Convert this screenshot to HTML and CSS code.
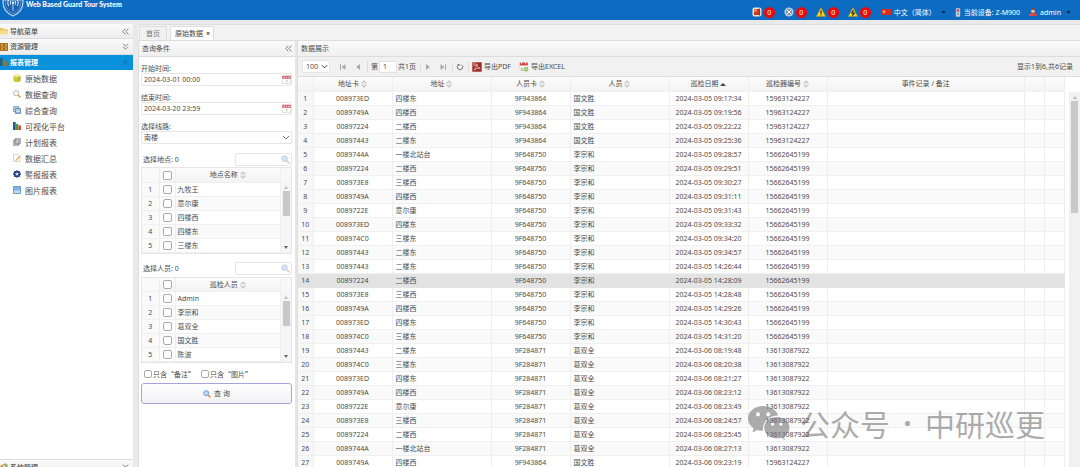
FILE: index.html
```html
<!DOCTYPE html>
<html>
<head>
<meta charset="utf-8">
<title>Web Based Guard Tour System</title>
<link rel="stylesheet" href="styles.css">
</head>
<body>
<svg class="defs" aria-hidden="true">
  <symbol id="sort" viewBox="0 0 6 8"><path d="M0 3.300 3 .3l3 3zM0 4.700l3 3 3-3z" fill="#bbb"/><path d="M1.800 2.700 3 1.500l1.200 1.200zM1.800 5.300 3 6.500l1.200-1.200z" fill="#fff"/></symbol>
  <symbol id="chev" viewBox="0 0 8 5"><path d="M1 1l3 3 3-3" fill="none" stroke="currentColor" stroke-width="1"/></symbol>
  <symbol id="caret" viewBox="0 0 6 4"><path d="M0 0h6L3 4z" fill="currentColor"/></symbol>
  <symbol id="collapse" viewBox="0 0 7 7"><path d="M3.300.6.7 3.500l2.600 2.900M6.400.6 3.800 3.500l2.600 2.900" fill="none" stroke="#666" stroke-width=".8"/></symbol>
  <symbol id="down" viewBox="0 0 7 7"><path d="M1 .7l2.500 2.500L6 .7M1 3.700l2.500 2.500L6 3.700" fill="none" stroke="#666" stroke-width=".8"/></symbol>
  <symbol id="up" viewBox="0 0 7 7"><path d="M1 3.300 3.500.8 6 3.300M1 6.300l2.500-2.500L6 6.300" fill="none" stroke="#15608f" stroke-width=".8"/></symbol>
  <symbol id="cal" viewBox="0 0 9 9"><path d="M.5 1h8v7.500h-8z" fill="#fff" stroke="#ccc" stroke-width=".6"/><path d="M.3.8h8.400v3H.3z" fill="#d9606a"/><path d="M1.500 2.300h1.500m1 0h1m1 0h1.500" stroke="#fff" stroke-width=".8"/><path d="M4 5.200h1v2.300" fill="none" stroke="#c99" stroke-width=".7"/></symbol>
  <symbol id="mag" viewBox="0 0 10 10"><circle cx="4" cy="4" r="3" fill="#d5e6f8" stroke="#b4c9e0"/><path d="M6.300 6.300 9 9" stroke="#dcc6b4" stroke-width="1.500" stroke-linecap="round"/></symbol>
  <symbol id="chart" viewBox="0 0 10 10"><path d="M0 0h3.400v10H0z" fill="#2c5b86"/><path d="M3.400 2.500h3.300V10H3.400z" fill="#3d9a50"/><path d="M6.700 4.300H10V10H6.700z" fill="#c9502f"/></symbol>
</svg>

<header class="top">
  <div class="brand">
    <svg class="logo" viewBox="0 0 22 17"><path d="M1 0h20v2c0 6-3 11-10 14C4 13 1 8 1 2z" fill="#1b64b2" stroke="#b8d4ee" stroke-width="1.200"/><path d="M3.200 0v2c0 5 2.500 9 7.800 11.700C16.300 11 18.800 7 18.800 2V0" fill="none" stroke="#6ba3d8" stroke-width=".7"/><path d="M6.500 0C5.500 2 5.500 4 6.800 6M8.800 1c-.6 1.200-.6 2.500 0 3.700M15.500 0c1 2 1 4-.3 6M13.200 1c.6 1.200.6 2.500 0 3.700" fill="none" stroke="#fff" stroke-width=".9"/><circle cx="11" cy="2.600" r="1.200" fill="#fff"/><path d="M11 3v8" stroke="#dbe9f7" stroke-width=".8"/></svg>
    <span class="name">Web Based Guard Tour System</span>
  </div>
  <div class="status">
    <span class="alert"><svg class="i10" viewBox="0 0 10 10"><rect x=".5" y=".5" width="9" height="9" rx="2" fill="#e8e2e0"/><path d="M2 2h5v6H2z" fill="#c43a21"/><path d="M2 2h3v3H2z" fill="#f07a4a"/><path d="M7.600 1.500v7" stroke="#333" stroke-width=".9"/></svg><b class="badge">0</b></span>
    <span class="alert"><svg class="i10" viewBox="0 0 10 10"><circle cx="5" cy="5" r="4.600" fill="#b9cbd9"/><circle cx="5" cy="5" r="3" fill="#7b96ab"/><path d="M2.800 2.800l4.400 4.400m0-4.400L2.800 7.200" stroke="#eef4f8"/></svg><b class="badge">0</b></span>
    <span class="alert"><svg class="i10" viewBox="0 0 10 10"><path d="M5 .5 9.700 9.500H.3z" fill="#f4d321" stroke="#a98f15" stroke-width=".5"/><path d="M5 3.500v3.200M5 7.400v1.200" stroke="#222" stroke-width="1.200"/></svg><b class="badge">0</b></span>
    <span class="alert"><svg class="i10" viewBox="0 0 10 10"><path d="M5 .5 9.700 9.500H.3z" fill="#f4d321" stroke="#a98f15" stroke-width=".5"/><path d="M5.500 3 3.800 6h2.600L4.300 8.600" fill="none" stroke="#222" stroke-width="1.100"/></svg><b class="badge">0</b></span>
    <button class="menu lang"><svg class="flag" viewBox="0 0 9 6"><path d="M0 0h9v6H0z" fill="#dc2b24"/><path d="M2 .8l.5 1.300 1.300.1-1 .8.3 1.300L2 3.600l-1.100.7.3-1.300-1-.8 1.300-.1z" fill="#f7d54a"/></svg><span>中文（简体）</span><svg class="caret"><use href="#caret"/></svg></button>
    <span class="device"><svg class="dev" viewBox="0 0 6 9"><rect x=".8" y=".3" width="4.400" height="8.400" rx=".8" fill="#c9ced3"/><path d="M1.600 1.400h2.800v2H1.600z" fill="#c34a42"/><path d="M2 5h2M2 6.500h2" stroke="#6c7680" stroke-width=".7"/></svg><span>当前设备: Z-M900</span></span>
    <button class="menu user"><svg class="usr" viewBox="0 0 8 8"><path d="M0 8c0-2.500 1.500-3.500 4-3.500S8 5.500 8 8z" fill="#d7464a"/><circle cx="4" cy="2.800" r="2" fill="#f3c4a0"/><path d="M2 2.500C2 .8 3 .2 4 .2s2 .6 2 2.300L4 1.800z" fill="#8b3f2c"/></svg><span>admin</span><svg class="caret"><use href="#caret"/></svg></button>
  </div>
</header>

<div class="shell">
  <nav class="nav">
    <div class="nav-head"><svg class="i8" viewBox="0 0 8 8"><path d="M0 1h3l1 1.200h4V7H0z" fill="#f0c65c"/><path d="M0 3.500h8V7.500H0z" fill="#f8dc8c"/></svg><b>导航菜单</b><svg class="i7"><use href="#collapse"/></svg></div>
    <button class="nav-group"><svg class="i8" viewBox="0 0 8 8"><path d="M0 0h8v8H0z" fill="#a8711f"/><path d="M1 1h6v2.500H1zM1 4.500h6V7H1z" fill="#d39a3c"/><path d="M3 2.300h2M3 5.800h2" stroke="#6e430b"/></svg><b>资源管理</b><svg class="i7"><use href="#down"/></svg></button>
    <button class="nav-group open"><svg class="i8"><use href="#chart"/></svg><b>报表管理</b><svg class="i7"><use href="#up"/></svg></button>
    <div class="nav-items">
      <a href="#"><svg class="i8" viewBox="0 0 8 8"><path d="M.5 1.500h7v5c0 2-7 2-7 0z" fill="#d4c933"/><path d="M5 2h2.500v4.500L5 7.600z" fill="#a8b84a"/><ellipse cx="4" cy="1.600" rx="3.500" ry="1.300" fill="#f1ec9b"/></svg>原始数据</a>
      <a href="#"><svg class="i8" viewBox="0 0 8 8"><circle cx="3.200" cy="3.200" r="2.600" fill="#f4f8fc" stroke="#b8a59a" stroke-width=".8"/><path d="M5.200 5.200l2.300 2.200" stroke="#d08a3a" stroke-width="1.300"/></svg>数据查询</a>
      <a href="#"><svg class="i8" viewBox="0 0 8 8"><path d="M.4.4h5.200v5.200H.4z" fill="#b9cfe5" stroke="#6e8fb2" stroke-width=".7"/><path d="M2.400 2.400h5.200v5.200H2.400z" fill="#8fb4da" stroke="#56789c" stroke-width=".7"/><path d="M3.200 4h3.600M3.200 5.500h3.600" stroke="#fff" stroke-width=".6"/></svg>综合查询</a>
      <a href="#"><svg class="i8"><use href="#chart"/></svg>可视化平台</a>
      <a href="#"><svg class="i8" viewBox="0 0 8 8"><path d="M2.400.4h5.200v5H2.400zM1.400 1.400h5.200v5H1.400zM.4 2.600h5v5h-5z" fill="#eee" stroke="#888" stroke-width=".7"/><path d="M1.500 4h3M1.500 5.500h3M3 3.500v3" stroke="#999" stroke-width=".6"/></svg>计划报表</a>
      <a href="#"><svg class="i8" viewBox="0 0 8 8"><path d="M.5.4h4.500l2 2v5.200H.5z" fill="#fff" stroke="#b5b5b5" stroke-width=".6"/><path d="M7.500 2.500 3.500 6.800 2.300 7.200l.4-1.300 3.800-4.200z" fill="#eba03a"/></svg>数据汇总</a>
      <a href="#"><svg class="i8" viewBox="0 0 8 8"><path d="M4 0 5 1l1.700-.1.400 1.600L8 4l-.9 1.500-.4 1.600L5 7 4 8 3 7l-1.700.1L.9 5.500 0 4l.9-1.500.4-1.600L3 1z" fill="#243f86"/><path d="M4 2l.6 1.300H6L5 4.400l.4 1.400L4 5l-1.400.8L3 4.400 2 3.300h1.400z" fill="#d7e3f7"/></svg>警报报表</a>
      <a href="#"><svg class="i8" viewBox="0 0 8 8"><path d="M.4.4h7.200v7.200H.4z" fill="#7fb4e6" stroke="#4c7fb0" stroke-width=".7"/><path d="M1 4.500h6V7H1z" fill="#c3dcf2"/></svg>图片报表</a>
    </div>
    <button class="nav-group last"><svg class="i8" viewBox="0 0 8 8"><circle cx="3" cy="4.500" r="3" fill="#e39a3c"/><circle cx="5.300" cy="3" r="2.500" fill="#8fb56a"/><circle cx="4" cy="3.500" r="1" fill="#fff"/></svg><b>系统管理</b><svg class="i7"><use href="#down"/></svg></button>
  </nav>

  <main class="work">
    <div class="tabs">
      <a class="tab" href="#">首页</a>
      <a class="tab active" href="#">原始数据<b class="x">×</b></a>
    </div>
    <div class="panels">
      <section class="query">
        <h2 class="panel-head">查询条件<svg class="i7"><use href="#collapse"/></svg></h2>
        <form class="form">
          <div class="field"><label for="from">开始时间:</label><div class="box"><input id="from" type="text" value="2024-03-01 00:00"><svg class="cal"><use href="#cal"/></svg></div></div>
          <div class="field"><label for="to">结束时间:</label><div class="box"><input id="to" type="text" value="2024-03-20 23:59"><svg class="cal"><use href="#cal"/></svg></div></div>
          <div class="field"><label for="line">选择线路:</label><div class="box"><select id="line"><option>南楼</option></select><svg class="chev"><use href="#chev"/></svg></div></div>

          <div class="picker">
            <div class="picker-head"><label for="sp">选择地点: 0</label><div class="box search"><input id="sp" type="text"><svg class="mag"><use href="#mag"/></svg></div></div>
            <div class="list">
              <table>
                <thead><tr><th class="n"></th><th class="c"><input type="checkbox" aria-label="全选"></th><th>地点名称 <svg class="sort"><use href="#sort"/></svg></th></tr></thead>
                <tbody>
                  <tr><td class="n">1</td><td class="c"><input type="checkbox" id="p1"></td><td><label for="p1">九牧王</label></td></tr>
                  <tr><td class="n">2</td><td class="c"><input type="checkbox" id="p2"></td><td><label for="p2">意尔康</label></td></tr>
                  <tr><td class="n">3</td><td class="c"><input type="checkbox" id="p3"></td><td><label for="p3">四楼西</label></td></tr>
                  <tr><td class="n">4</td><td class="c"><input type="checkbox" id="p4"></td><td><label for="p4">四楼东</label></td></tr>
                  <tr><td class="n">5</td><td class="c"><input type="checkbox" id="p5"></td><td><label for="p5">三楼东</label></td></tr>
                </tbody>
              </table>
              <div class="scroll"><i class="arrow-up"></i><i class="thumb"></i><i class="arrow-down"></i></div>
            </div>
          </div>

          <div class="picker">
            <div class="picker-head"><label for="su">选择人员: 0</label><div class="box search"><input id="su" type="text"><svg class="mag"><use href="#mag"/></svg></div></div>
            <div class="list">
              <table>
                <thead><tr><th class="n"></th><th class="c"><input type="checkbox" aria-label="全选"></th><th>巡检人员 <svg class="sort"><use href="#sort"/></svg></th></tr></thead>
                <tbody>
                  <tr><td class="n">1</td><td class="c"><input type="checkbox" id="u1"></td><td><label for="u1">Admin</label></td></tr>
                  <tr><td class="n">2</td><td class="c"><input type="checkbox" id="u2"></td><td><label for="u2">李宗和</label></td></tr>
                  <tr><td class="n">3</td><td class="c"><input type="checkbox" id="u3"></td><td><label for="u3">葛双全</label></td></tr>
                  <tr><td class="n">4</td><td class="c"><input type="checkbox" id="u4"></td><td><label for="u4">国文胜</label></td></tr>
                  <tr><td class="n">5</td><td class="c"><input type="checkbox" id="u5"></td><td><label for="u5">陈波</label></td></tr>
                </tbody>
              </table>
              <div class="scroll"><i class="arrow-up"></i><i class="thumb"></i><i class="arrow-down"></i></div>
            </div>
          </div>

          <div class="only">
            <label><input type="checkbox">只含“备注”</label>
            <label><input type="checkbox">只含“图片”</label>
          </div>
          <button class="go" type="button"><svg class="i8" viewBox="0 0 8 8"><circle cx="3.200" cy="3.200" r="2.500" fill="#bcd9f5" stroke="#6fa0d3"/><path d="M5.200 5.200l2.200 2.200" stroke="#d9853a" stroke-width="1.400"/></svg>查 询</button>
        </form>
      </section>

      <section class="data">
        <h2 class="panel-head">数据展示</h2>
        <div class="toolbar">
          <div class="box size"><select aria-label="每页"><option>100</option></select><svg class="chev"><use href="#chev"/></svg></div>
          <button class="pg" aria-label="首页"><svg class="i8" viewBox="0 0 8 8"><path d="M1.500 1v6" stroke="#aaa"/><path d="M6.500 1v6L2.500 4z" fill="#aaa"/></svg></button>
          <button class="pg" aria-label="上一页"><svg class="i8" viewBox="0 0 8 8"><path d="M6 1v6L2 4z" fill="#aaa"/></svg></button>
          <label class="page">第<input type="text" value="1"></label><span class="total">共1页</span>
          <button class="pg sep" aria-label="下一页"><svg class="i8" viewBox="0 0 8 8"><path d="M2 1v6l4-3z" fill="#aaa"/></svg></button>
          <button class="pg" aria-label="末页"><svg class="i8" viewBox="0 0 8 8"><path d="M6.500 1v6" stroke="#aaa"/><path d="M1.500 1v6l4-3z" fill="#aaa"/></svg></button>
          <button class="refresh sep" aria-label="刷新"><svg class="i8" viewBox="0 0 8 8"><path d="M5.500 1.800a2.700 2.700 0 1 1-3 0" fill="none" stroke="#666" stroke-width=".9"/><path d="M1.200 1h2.300v2.300z" fill="#666"/></svg></button>
          <button class="export pdf"><svg class="i10" viewBox="0 0 10 10"><path d="M.3.3h9.400v9.400H.3z" fill="#9c2a24"/><path d="M.3.3h4v4h-4z" fill="#c96a5e"/><path d="M2 8c1.500-1.500 3-4 2.800-6C5 4.500 6.500 6 8.200 6.300 6 6 4 6.600 2 8z" fill="none" stroke="#f3dcd8" stroke-width=".7"/></svg>导出PDF</button>
          <button class="export"><svg class="i10" viewBox="0 0 10 10"><path d="M1 .8h7.500v7.700H1z" fill="#f7f7f7" stroke="#ccc" stroke-width=".5"/><path d="M.8.6H8.800v2.800h-8z" fill="#d8433c"/><path d="M2.500 0v2M6.800 0v2" stroke="#fff" stroke-width=".7"/><circle cx="7" cy="7.300" r="2.300" fill="#8cbd6a"/><path d="M5.800 7.300h2.400" stroke="#fff" stroke-width=".8"/><path d="M2 6.500h2M2 8h2" stroke="#6b9c58" stroke-width=".7"/></svg>导出EXCEL</button>
          <span class="info">显示1到6,共6记录</span>
        </div>
        <div class="grid">
          <table>
            <colgroup><col class="w-n"><col class="w-s"><col class="w-m"><col class="w-s"><col class="w-m"><col class="w-s"><col class="w-s"><col><col class="w-x"><col class="w-x"></colgroup>
            <thead><tr><th></th><th>地址卡 <svg class="sort"><use href="#sort"/></svg></th><th>地址 <svg class="sort"><use href="#sort"/></svg></th><th>人员卡 <svg class="sort"><use href="#sort"/></svg></th><th>人员 <svg class="sort"><use href="#sort"/></svg></th><th>巡检日期 <svg class="asc" viewBox="0 0 6 3"><path d="M0 3h6L3 0z" fill="#444"/></svg></th><th>巡检器编号 <svg class="sort"><use href="#sort"/></svg></th><th>事件记录 / 备注</th><th></th><th></th></tr></thead>
            <tbody>
<tr><td>1</td><td>008973ED</td><td>四楼东</td><td>9F943864</td><td>国文胜</td><td>2024-03-05 09:17:34</td><td>15963124227</td><td></td><td></td><td></td></tr>
<tr><td>2</td><td>0089749A</td><td>四楼西</td><td>9F943864</td><td>国文胜</td><td>2024-03-05 09:19:56</td><td>15963124227</td><td></td><td></td><td></td></tr>
<tr><td>3</td><td>00897224</td><td>二楼西</td><td>9F943864</td><td>国文胜</td><td>2024-03-05 09:22:22</td><td>15963124227</td><td></td><td></td><td></td></tr>
<tr><td>4</td><td>00897443</td><td>二楼东</td><td>9F943864</td><td>国文胜</td><td>2024-03-05 09:25:36</td><td>15963124227</td><td></td><td></td><td></td></tr>
<tr><td>5</td><td>0089744A</td><td>一楼北站台</td><td>9F648750</td><td>李宗和</td><td>2024-03-05 09:28:57</td><td>15662645199</td><td></td><td></td><td></td></tr>
<tr><td>6</td><td>00897224</td><td>二楼西</td><td>9F648750</td><td>李宗和</td><td>2024-03-05 09:29:51</td><td>15662645199</td><td></td><td></td><td></td></tr>
<tr><td>7</td><td>008973E8</td><td>三楼西</td><td>9F648750</td><td>李宗和</td><td>2024-03-05 09:30:27</td><td>15662645199</td><td></td><td></td><td></td></tr>
<tr><td>8</td><td>0089749A</td><td>四楼西</td><td>9F648750</td><td>李宗和</td><td>2024-03-05 09:31:11</td><td>15662645199</td><td></td><td></td><td></td></tr>
<tr><td>9</td><td>0089722E</td><td>意尔康</td><td>9F648750</td><td>李宗和</td><td>2024-03-05 09:31:43</td><td>15662645199</td><td></td><td></td><td></td></tr>
<tr><td>10</td><td>008973ED</td><td>四楼东</td><td>9F648750</td><td>李宗和</td><td>2024-03-05 09:33:32</td><td>15662645199</td><td></td><td></td><td></td></tr>
<tr><td>11</td><td>008974C0</td><td>三楼东</td><td>9F648750</td><td>李宗和</td><td>2024-03-05 09:34:20</td><td>15662645199</td><td></td><td></td><td></td></tr>
<tr><td>12</td><td>00897443</td><td>二楼东</td><td>9F648750</td><td>李宗和</td><td>2024-03-05 09:34:57</td><td>15662645199</td><td></td><td></td><td></td></tr>
<tr><td>13</td><td>00897443</td><td>二楼东</td><td>9F648750</td><td>李宗和</td><td>2024-03-05 14:26:44</td><td>15662645199</td><td></td><td></td><td></td></tr>
<tr class="hover"><td>14</td><td>00897224</td><td>二楼西</td><td>9F648750</td><td>李宗和</td><td>2024-03-05 14:28:09</td><td>15662645199</td><td></td><td></td><td></td></tr>
<tr><td>15</td><td>008973E8</td><td>三楼西</td><td>9F648750</td><td>李宗和</td><td>2024-03-05 14:28:48</td><td>15662645199</td><td></td><td></td><td></td></tr>
<tr><td>16</td><td>0089749A</td><td>四楼西</td><td>9F648750</td><td>李宗和</td><td>2024-03-05 14:29:26</td><td>15662645199</td><td></td><td></td><td></td></tr>
<tr><td>17</td><td>008973ED</td><td>四楼东</td><td>9F648750</td><td>李宗和</td><td>2024-03-05 14:30:43</td><td>15662645199</td><td></td><td></td><td></td></tr>
<tr><td>18</td><td>008974C0</td><td>三楼东</td><td>9F648750</td><td>李宗和</td><td>2024-03-05 14:31:20</td><td>15662645199</td><td></td><td></td><td></td></tr>
<tr><td>19</td><td>00897443</td><td>二楼东</td><td>9F284871</td><td>葛双全</td><td>2024-03-06 08:19:48</td><td>13613087922</td><td></td><td></td><td></td></tr>
<tr><td>20</td><td>008974C0</td><td>三楼东</td><td>9F284871</td><td>葛双全</td><td>2024-03-06 08:20:38</td><td>13613087922</td><td></td><td></td><td></td></tr>
<tr><td>21</td><td>008973ED</td><td>四楼东</td><td>9F284871</td><td>葛双全</td><td>2024-03-06 08:21:27</td><td>13613087922</td><td></td><td></td><td></td></tr>
<tr><td>22</td><td>0089749A</td><td>四楼西</td><td>9F284871</td><td>葛双全</td><td>2024-03-06 08:23:12</td><td>13613087922</td><td></td><td></td><td></td></tr>
<tr><td>23</td><td>0089722E</td><td>意尔康</td><td>9F284871</td><td>葛双全</td><td>2024-03-06 08:23:49</td><td>13613087922</td><td></td><td></td><td></td></tr>
<tr><td>24</td><td>008973E8</td><td>三楼西</td><td>9F284871</td><td>葛双全</td><td>2024-03-06 08:24:57</td><td>13613087922</td><td></td><td></td><td></td></tr>
<tr><td>25</td><td>00897224</td><td>二楼西</td><td>9F284871</td><td>葛双全</td><td>2024-03-06 08:25:45</td><td>13613087922</td><td></td><td></td><td></td></tr>
<tr><td>26</td><td>0089744A</td><td>一楼北站台</td><td>9F284871</td><td>葛双全</td><td>2024-03-06 08:27:13</td><td>13613087922</td><td></td><td></td><td></td></tr>
<tr><td>27</td><td>0089749A</td><td>四楼西</td><td>9F943864</td><td>国文胜</td><td>2024-03-06 09:23:19</td><td>15963124227</td><td></td><td></td><td></td></tr>
            </tbody>
          </table>
          <div class="scroll big"><i class="arrow-up"></i><i class="thumb"></i></div>
        </div>
      </section>
    </div>
  </main>
</div>

<div class="mark">
  <svg class="wechat" viewBox="0 0 42 34"><path fill-rule="evenodd" d="M15 0C6.700 0 0 5.500 0 12.500c0 4 2.200 7.500 5.700 9.800L4.400 26.500l5-2.600c1.800.6 3.500.8 5.600.8C14 16 21 9.500 30 9.500 28.700 4 22.500 0 15 0zM10 6.200a2 2 0 1 1 0 4.200 2 2 0 0 1 0-4.200zm10.300 0a2 2 0 1 1 0 4.200 2 2 0 0 1 0-4.200z"/><path fill-rule="evenodd" d="M41.500 21.700c0-6-5.800-10.700-12.700-10.700S16.200 15.700 16.200 21.700s5.600 10.700 12.600 10.700c1.500 0 3-.2 4.300-.6l4 2.100-1.100-3.400c3.300-2.100 5.500-5.200 5.500-8.800zM24.600 16.500a1.600 1.600 0 1 1 0 3.300 1.600 1.600 0 0 1 0-3.300zm8.300 0a1.600 1.600 0 1 1 0 3.300 1.600 1.600 0 0 1 0-3.300z"/></svg>
  <span>公众号</span><span class="dot">·</span><span>中研巡更</span>
</div>
</body>
</html>
```

FILE: styles.css
```css
* { box-sizing: border-box; }
body {
  margin: 0;
  height: 100vh;
  display: flex;
  flex-direction: column;
  overflow: hidden;
  background: #fff;
  color: #4c4c4c;
  font: 7px/9px "Noto Sans", "Noto Sans CJK SC", sans-serif;
}
button, input, select { font: inherit; color: inherit; margin: 0; padding: 0; border: 0; background: none; }
a { color: inherit; text-decoration: none; }
svg { display: block; flex: none; }
.defs { position: absolute; width: 0; height: 0; }
.i7 { width: 7px; height: 7px; }
.i8 { width: 8px; height: 8px; }
.i10 { width: 10px; height: 10px; }

/* top bar */
.top { flex: none; height: 20px; display: flex; justify-content: space-between; background: #0d6cc2; color: #fff; }
.brand { display: flex; align-items: flex-start; gap: 2px; padding-left: 2px; }
.logo { width: 22px; height: 17px; }
.name { font: 900 7px/8px Lato, sans-serif; }
.status { display: flex; align-items: center; padding: 4px 9px 0 0; }
.alert { display: flex; align-items: center; gap: 2px; margin-right: 9px; }
.badge { width: 11px; height: 11px; border-radius: 50%; background: #f00808; font-weight: 400; line-height: 11px; text-align: center; }
.menu, .device { display: flex; align-items: center; gap: 3px; }
.flag { width: 9px; height: 6px; }
.dev { width: 6px; height: 9px; }
.usr { width: 8px; height: 8px; }
.caret { width: 5px; height: 3px; color: #0a2b4e; margin-left: 2px; }
.lang { margin: 0 9px 0 2px; }
.device { margin-right: 9px; }

/* page frame */
.shell { flex: 1; min-height: 0; display: flex; gap: 5px; padding-top: 4px; background: #e9e9e9; }
.nav { flex: 0 0 133px; display: flex; flex-direction: column; background: #fff; }
.nav-head, .nav-group {
  flex: none; height: 16px; display: flex; align-items: center; gap: 2px; padding: 0 4px 0 0;
  background: linear-gradient(#fafafa, #ededed); border-bottom: 1px solid #ddd; text-align: left; width: 100%;
}
.nav-head { height: 15px; }
.nav-head b, .nav-group b { flex: 1; font-weight: 500; }
.nav-group.open { height: 15px; background: #0a93dc; border-color: #0a93dc; color: #fff; }
.nav-group.open b { font-weight: 700; }
.nav-group.last { border-top: 1px solid #ddd; margin: auto 0 -8px; }
.nav-items { display: flex; flex-direction: column; }
.nav-items a { height: 16px; display: flex; align-items: center; gap: 4px; padding-left: 13px; font-size: 8px; }

.work { flex: 1; min-width: 0; display: flex; flex-direction: column; background: #fff; }
.tabs { flex: none; height: 17px; display: flex; align-items: flex-end; gap: 3px; padding-left: 1px; background: #f3f3f3; border-top: 1px solid #ddd; border-bottom: 1px solid #ddd; }
.tab { height: 14px; display: flex; align-items: center; gap: 3px; padding: 0 6px; border: 1px solid #ddd; border-bottom: 0; border-radius: 2px 2px 0 0; background: #f1f1f1; color: #777; }
.tab.active { background: #fff; color: #444; padding: 0 3px 0 4px; }
.x { font-weight: 700; }
.panels { flex: 1; min-height: 0; display: flex; gap: 2px; background: #e6e6e6; }
.panel-head { flex: none; height: 16px; margin: 0; padding: 0 3px; display: flex; align-items: center; justify-content: space-between; font-size: 7px; font-weight: 400; background: linear-gradient(#fafafa, #f0f0f0); border-bottom: 1px solid #ddd; }

/* query form */
.query { flex: 0 0 157px; background: #fff; border-left: 1px solid #ddd; }
.form { padding: 7px 3px 0 2px; }
.field { margin-bottom: 7px; }
.field label { display: block; }
.box { position: relative; display: flex; border: 1px solid #e6e6e6; border-radius: 2px; background: #fff; }
.box input, .box select { flex: 1; min-width: 0; width: 100%; height: 11px; padding-left: 2px; appearance: none; outline: 0; }
.cal { position: absolute; right: 0; top: 1px; width: 9px; height: 9px; }
.chev { position: absolute; right: 1px; top: 3px; width: 8px; height: 5px; color: #777; }
.mag { position: absolute; right: 1px; top: 1px; width: 9px; height: 9px; }
.picker { margin-top: 8px; }
.picker-head { display: flex; align-items: center; justify-content: space-between; height: 14px; margin-bottom: 1px; padding-left: 2px; }
.search { width: 57px; }
.list { display: flex; position: relative; border: 1px solid #e6e6e6; background: #f8f8f8; }
.list table { flex: 1; background: #fff; }
table { border-collapse: collapse; table-layout: fixed; width: 100%; }
th, td { height: 14px; padding: 0; line-height: 9px; font-weight: 400; white-space: nowrap; overflow: hidden; border-right: 1px solid #eee; border-bottom: 1px solid #f0f0f0; }
th { background: linear-gradient(#fcfcfc, #f3f3f3); }
tbody tr:nth-child(even) { background: #fafafa; }
.list .n { width: 17px; text-align: center; background: #fafafa; }
.list .c { width: 16px; text-align: center; }
.list td { padding-left: 2px; }
.list td.n, .list td.c { padding: 0; }
.sort { display: inline-block; width: 6px; height: 8px; vertical-align: middle; }
.asc { display: inline-block; width: 6px; height: 3px; vertical-align: middle; }
input[type="checkbox"] { appearance: none; width: 9px; height: 9px; border: 1px solid #aaa; border-radius: 2px; background: #fff; vertical-align: middle; }
.scroll { flex: none; width: 10px; margin-top: 14px; display: flex; flex-direction: column; align-items: center; gap: 2px; padding: 4px 0; background: #f5f5f5; }
.thumb { width: 7px; height: 25px; background: #c8c8c8; }
.arrow-up, .arrow-down { border: 2px solid transparent; border-top: 0; border-bottom: 3px solid #bbb; }
.arrow-down { border-top: 3px solid #666; border-bottom: 0; margin-top: auto; }
.only { display: flex; gap: 6px; height: 12px; margin: 5px 0 3px 3px; font-family: "Noto Sans CJK SC", sans-serif; }
.only label { display: flex; align-items: center; gap: 1px; }
.only input[type="checkbox"] { width: 8px; height: 8px; }
.go { width: 100%; height: 21px; display: flex; align-items: center; justify-content: center; gap: 3px; border: 1px solid #a5a5dc; border-radius: 3px; background: linear-gradient(#fff, #f1f1f3); }

/* result grid */
.data { flex: 1; min-width: 0; display: flex; flex-direction: column; overflow: hidden; background: #fff; border-left: 1px solid #ddd; }
.toolbar { flex: none; height: 20px; display: flex; align-items: center; padding: 0 7px 0 4px; background: #f1f1f1; border-bottom: 1px solid #ddd; }
.size { width: 28px; margin-right: 9px; }
.size .chev { width: 7px; right: 1px; color: #222; }
.size select { padding-left: 3px; }
.pg { margin-right: 7px; }
.page { display: flex; align-items: center; gap: 1px; margin-left: -2px; padding-left: 3px; border-left: 1px solid #ddd; }
.page input { width: 18px; height: 12px; padding-left: 3px; border: 1px solid #e2e2e2; background: #fff; }
.total { margin: 0 4px 0 1px; }
.sep { padding-left: 3px; border-left: 1px solid #ddd; }
.refresh { margin: 0 4px 0 -2px; }
.export { display: flex; align-items: center; gap: 2px; margin-right: 8px; }
.pdf { padding-left: 3px; border-left: 1px solid #ddd; }
.info { margin-left: auto; }
.grid { display: flex; align-items: flex-start; flex: 1; }
.grid table { flex: 1; }
.grid th { height: 14px; }
.grid td { text-align: center; }
.grid td:first-child { background: #f8f8f8; }
.grid td:nth-child(3), .grid td:nth-child(5) { text-align: left; padding-left: 3px; }
.w-n { width: 15px; }
.w-s { width: 79px; }
.w-m { width: 99px; }
.w-x { width: 20px; }
.grid .hover td { background: #e3e3e3; border-color: #e3e3e3; }
.big { align-self: stretch; width: 11px; margin: 15px 0 0 4px; background: #f1f1f1; }
.big .thumb { height: 112px; }

.mark { position: absolute; right: 35px; bottom: 27px; display: flex; align-items: center; color: rgba(90, 90, 90, .5); font: 400 30px/34px "Noto Sans CJK SC", sans-serif; }
.wechat { width: 42px; height: 34px; margin-right: 10px; fill: #777; opacity: .6; }
.dot { width: 35px; text-align: center; font-family: "Noto Sans", sans-serif; font-weight: 700; }
```
